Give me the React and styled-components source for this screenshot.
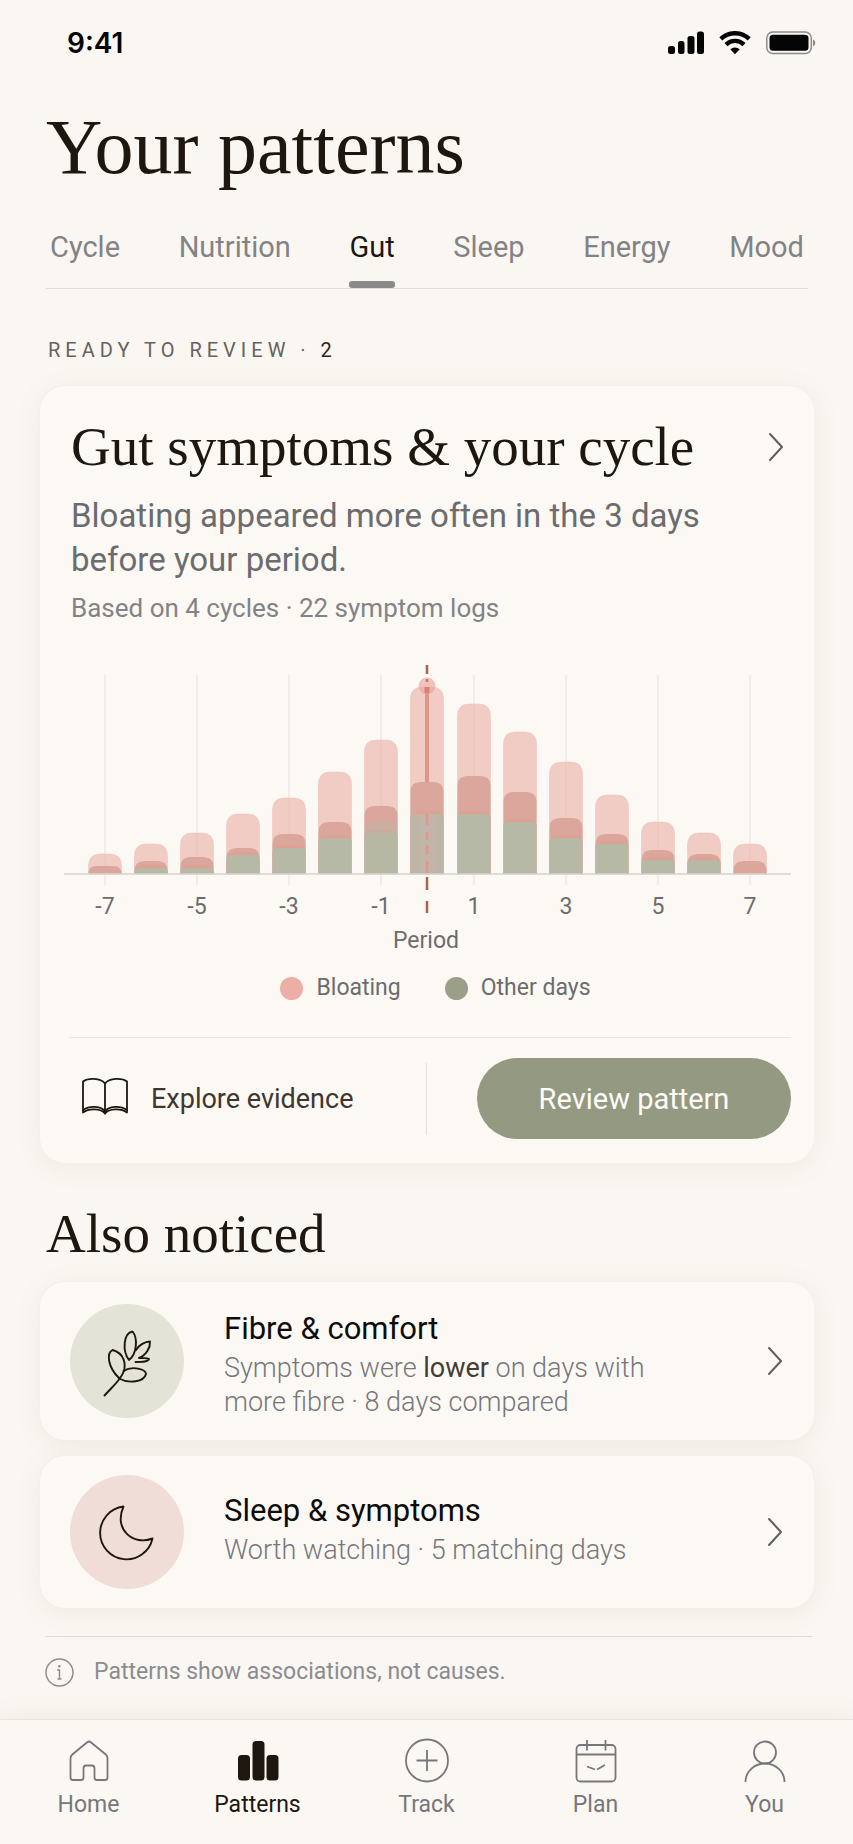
import { useState } from "react";
import styled, { createGlobalStyle } from "styled-components";

const sans = `Roboto, "Liberation Sans", Arial, sans-serif`;
const serif = `"Liberation Serif", "Times New Roman", serif`;

const GlobalStyle = createGlobalStyle`
    * {
        box-sizing: border-box;
    }
    body {
        margin: 0;
        background-color: #faf7f2;
        color: #1d1710;
        font-family: ${sans};
        font-weight: 400;
    }
    h1, h2, h3, p, figure {
        margin: 0;
        font-weight: inherit;
    }
    button {
        padding: 0;
        border: 0;
        background: none;
        color: inherit;
        font-family: inherit;
        font-weight: inherit;
        cursor: pointer;
    }
    a {
        color: inherit;
        text-decoration: none;
    }
    svg {
        display: block;
        flex-shrink: 0;
    }
`;

const Screen = styled.div`
    display: flex;
    flex-direction: column;
    min-height: 100vh;
`;

const StatusBar = styled.div`
    display: flex;
    align-items: center;
    justify-content: space-between;
    padding: 27px 37px 0 67px;
    color: #050505;
`;
const Time = styled.span`
    font-family: Inter, ${sans};
    font-weight: 600;
    font-size: 28px;
    line-height: 32px;
`;
const StatusIcons = styled.div`
    display: flex;
    align-items: center;
    gap: 15px;
`;

const Main = styled.main`
    flex: 1;
    padding: 44px 38px 31px 39px;
`;
const PageTitle = styled.h1`
    padding-left: 7px;
    font-family: ${serif};
    font-size: 78px;
    line-height: 88px;
`;

const Tabs = styled.nav`
    display: flex;
    justify-content: space-between;
    margin: 38px 7px 0;
    padding: 0 4px;
    border-bottom: 1px solid #dfdad5;
`;
const Tab = styled.button`
    font-size: 29px;
    line-height: 36px;
    color: ${(props) => (props.$active ? "#1d1710" : "#838386")};
    &::after {
        content: "";
        display: block;
        height: 7px;
        margin-top: 16px;
        border-radius: 3px;
        background-color: ${(props) => (props.$active ? "#8b8a89" : "transparent")};
    }
`;

const SectionLabel = styled.p`
    margin-top: 49px;
    padding-left: 9px;
    font-size: 20px;
    line-height: 24px;
    letter-spacing: 5px;
    color: #66625f;
    strong {
        font-weight: inherit;
        color: #2b2520;
    }
`;

const Surface = styled.section`
    border: 1px solid #f3efe9;
    border-radius: 26px;
    background-color: #fcf9f4;
    box-shadow: 0 4px 26px rgba(110, 90, 60, 0.08);
`;
const PatternCard = styled(Surface)`
    margin-top: 23px;
    padding: 29px 23px 24px 24px;
`;
const CardHead = styled.div`
    display: flex;
    align-items: center;
    justify-content: space-between;
    padding: 0 6px 0 7px;
`;
const Heading = styled.h2`
    font-family: ${serif};
    font-size: 55px;
    line-height: 64px;
`;
const IconButton = styled.button`
    color: #5f5f61;
`;
const Summary = styled.p`
    max-width: 660px;
    margin-top: 15px;
    padding-left: 7px;
    font-size: 33px;
    line-height: 44px;
    color: #6c6c6f;
`;
const Basis = styled.p`
    margin-top: 10px;
    padding-left: 7px;
    font-size: 26px;
    line-height: 32px;
    color: #838386;
`;

const ChartBox = styled.figure`
    margin-top: 36px;
    svg {
        width: 100%;
        height: auto;
    }
    text {
        font-size: 23px;
        text-anchor: middle;
        fill: #6c6c6f;
    }
`;
const Legend = styled.figcaption`
    display: flex;
    justify-content: center;
    gap: 44px;
    margin-top: 20px;
    padding-left: 16px;
`;
const LegendItem = styled.span`
    display: flex;
    align-items: center;
    gap: 13px;
    font-size: 23px;
    line-height: 28px;
    color: #6c6c6f;
    &::before {
        content: "";
        width: 23px;
        height: 23px;
        border-radius: 50%;
        background-color: ${(props) => props.$color};
    }
`;

const Actions = styled.div`
    display: flex;
    align-items: center;
    margin: 35px 0 0 5px;
    padding-top: 20px;
    border-top: 1px solid #e8e5e0;
`;
const EvidenceLink = styled.a`
    display: flex;
    flex: 1;
    align-items: center;
    gap: 23px;
    height: 72px;
    padding-left: 13px;
    border-right: 1px solid #e2dfda;
    font-size: 27px;
    color: #40362f;
`;
const ReviewButton = styled.button`
    width: 314px;
    height: 81px;
    margin-left: 50px;
    border-radius: 41px;
    background-color: #949981;
    font-size: 29px;
    color: #fdfcf9;
`;

const AlsoNoticed = styled(Heading)`
    margin-top: 38px;
    padding-left: 7px;
`;
const NoticeList = styled.div`
    display: grid;
    gap: 14px;
    margin-top: 15px;
`;
const NoticeCard = styled(Surface).attrs({ as: "a" })`
    display: flex;
    align-items: center;
    gap: 40px;
    padding: ${(props) => (props.$tall ? "21px" : "19px")} 30px;
`;
const Badge = styled.div`
    flex-shrink: 0;
    width: 114px;
    height: 114px;
    border-radius: 50%;
    background-color: ${(props) => props.$color};
`;
const NoticeText = styled.div`
    flex: 1;
    padding: ${(props) => (props.$tall ? "8px 0 0" : "0 0 4px")};
`;
const NoticeTitle = styled.h3`
    font-size: 31px;
    line-height: 36px;
    color: #0d0c0b;
`;
const NoticeDetail = styled.p`
    max-width: 440px;
    margin-top: 4px;
    font-size: 27px;
    font-weight: 300;
    line-height: 34px;
    color: #77777b;
    strong {
        font-weight: 400;
        color: #453c37;
    }
`;
const NoticeArrow = styled.span`
    color: #5f5f61;
`;

const Note = styled.p`
    display: flex;
    align-items: center;
    gap: 20px;
    margin: 27px 3px 0 6px;
    padding-top: 19px;
    border-top: 1px solid #dedad5;
    font-size: 23px;
    line-height: 32px;
    color: #8c8c90;
`;

const TabBar = styled.nav`
    display: grid;
    grid-template-columns: repeat(5, 1fr);
    padding: 18px 4px 25px;
    border-top: 1px solid #e9e5df;
    background-color: #fbf8f3;
    box-shadow: 0 -4px 24px rgba(110, 90, 60, 0.07);
`;
const TabBarItem = styled.a`
    display: flex;
    flex-direction: column;
    align-items: center;
    gap: 7px;
    font-size: 23px;
    line-height: 28px;
    color: ${(props) => (props.$active ? "#1d1710" : "#77777a")};
`;

const tabs = ["Cycle", "Nutrition", "Gut", "Sleep", "Energy", "Mood"];

// heights in chart units: all logs, shared logs, other days
const days = [
    { day: -7, bloating: 20, overlap: 8, other: 0 },
    { day: -6, bloating: 30, overlap: 13, other: 6 },
    { day: -5, bloating: 41, overlap: 17, other: 6 },
    { day: -4, bloating: 60, overlap: 26, other: 19 },
    { day: -3, bloating: 76, overlap: 40, other: 26 },
    { day: -2, bloating: 102, overlap: 52, other: 36 },
    { day: -1, bloating: 134, overlap: 68, other: 41 },
    { day: 0, bloating: 187, overlap: 92, other: 60 },
    { day: 1, bloating: 170, overlap: 98, other: 60 },
    { day: 2, bloating: 142, overlap: 82, other: 52 },
    { day: 3, bloating: 112, overlap: 56, other: 36 },
    { day: 4, bloating: 79, overlap: 40, other: 30 },
    { day: 5, bloating: 52, overlap: 24, other: 14 },
    { day: 6, bloating: 41, overlap: 20, other: 14 },
    { day: 7, bloating: 30, overlap: 13, other: 0 },
];

const BASE = 214;
const CENTER = 363;
const STEP = 46;
const BAR = 33;

const dayX = (day) => CENTER + day * STEP + (day > 0 ? 1 : 0);

function barPath(day, height, radius) {
    const r = Math.min(radius, height);
    const left = dayX(day) - BAR / 2;
    const top = BASE - height;
    return `M${left} ${BASE}V${top + r}q0 ${-r} ${r} ${-r}h${BAR - 2 * r}q${r} 0 ${r} ${r}V${BASE}z`;
}

function Chart() {
    const labelled = days.filter(({ day }) => day % 2 !== 0);
    return (
        <svg viewBox="0 0 727 294" role="img" aria-label="Symptom logs by day around your period">
            <defs>
                <linearGradient id="periodDay" x1="0" x2="1" y1="0" y2="0">
                    <stop offset="0" stopColor="#b9b5a5" />
                    <stop offset="0.35" stopColor="#c3b5a9" />
                    <stop offset="0.65" stopColor="#c3b5a9" />
                    <stop offset="1" stopColor="#b9b5a5" />
                </linearGradient>
            </defs>
            {labelled.map(({ day }) => (
                <path key={day} d={`M${dayX(day)} 15V225`} stroke="#e6e3de" />
            ))}
            {days.map(({ day, bloating, overlap, other }) => (
                <g key={day}>
                    <path d={barPath(day, bloating, 12)} fill="#ecb4ac" fillOpacity="0.66" stroke="#efc0b8" strokeOpacity="0.5" />
                    <path d={barPath(day, overlap, 10)} fill="#dba69b" />
                    {other > 0 && <path d={barPath(day, other + 3, 7)} fill="#e3a093" fillOpacity="0.7" />}
                    {other > 0 && <path d={barPath(day, other, 4)} fill={day === 0 ? "url(#periodDay)" : "#b6b9a5"} />}
                    {day === -1 && <path d={barPath(day, 52, 10)} fill="#b6b9a5" fillOpacity="0.45" />}
                </g>
            ))}
            <path d={`M0 ${BASE}H727`} stroke="#d9d0cb" strokeWidth="1.3" />
            <path d="M363 27V122" stroke="#e0958b" strokeWidth="4" />
            <circle cx="363" cy="26" r="8.500" fill="#e8a098" fillOpacity="0.6" />
            <path d="M360.500 27h5v6h-5z" fill="#d67f77" />
            <path d="M363 154v11m0 7v8m0 5v10m0 6v12" stroke="#dd9a90" strokeWidth="3" />
            <path d="M363 5v9M363 217v13M363 241v12" stroke="#ad6152" strokeWidth="2.500" />
            <path d="M363 19v3" stroke="#c9756b" strokeWidth="2.500" />
            {labelled.map(({ day }) => (
                <text key={day} x={dayX(day)} y="254">{day}</text>
            ))}
            <text x="362" y="288">Period</text>
        </svg>
    );
}

function Chevron() {
    return (
        <svg width="18" height="30" viewBox="0 0 18 30" fill="none" stroke="currentColor" strokeWidth="2" strokeLinecap="round" strokeLinejoin="round">
            <path d="M3 2l12 13L3 28" />
        </svg>
    );
}

function SignalIcon() {
    return (
        <svg width="36" height="24" viewBox="0 0 36 24" fill="currentColor">
            <rect x="0" y="15" width="7" height="8" rx="2.500" />
            <rect x="10" y="10" width="6.500" height="13" rx="2.500" />
            <rect x="19.500" y="5" width="7" height="18" rx="2.500" />
            <rect x="29" y="0.500" width="7" height="22.500" rx="2.500" />
        </svg>
    );
}

function WifiIcon() {
    return (
        <svg width="32" height="24" viewBox="0 0 32 24" fill="none" stroke="currentColor" strokeWidth="4.400">
            <path d="M1.800 7.900a20.500 20.500 0 0 1 28.400 0" />
            <path d="M7 13.600a12.800 12.800 0 0 1 18 0" />
            <path d="M16 23.300l-4.700-5a7 7 0 0 1 9.400 0z" fill="currentColor" stroke="none" />
        </svg>
    );
}

function BatteryIcon() {
    return (
        <svg width="50" height="24" viewBox="0 0 50 24">
            <rect x="0.800" y="1" width="44.500" height="21.500" rx="6" fill="none" stroke="#8c8b89" strokeWidth="1.500" />
            <rect x="3.500" y="3.800" width="39" height="16" rx="3.500" fill="currentColor" />
            <path d="M47 8.500c3 .8 3 6 0 6.800z" fill="#8c8b89" />
        </svg>
    );
}

function BookIcon() {
    return (
        <svg width="46" height="42" viewBox="0 0 46 42" fill="none" stroke="#1d1710" strokeWidth="1.800" strokeLinejoin="round" strokeLinecap="round">
            <path d="M23 5.500C18.500-.2 6-.2 1 3.500v31c6-4.500 18-4 22 1 4-5 16-5.500 22-1v-31C40-.2 27.500-.2 23 5.500z" />
            <path d="M23 5.500v30M1 32c6-4.500 18.500-4.500 22 1.500 3.500-6 16-6 22-1.500" />
        </svg>
    );
}

function SprigIcon() {
    return (
        <svg width="114" height="114" viewBox="0 0 114 114" fill="none" stroke="#1d1710" strokeWidth="1.900" strokeLinecap="round" strokeLinejoin="round">
            <path d="M34.500 91.500C42 83 50 77 53.500 68c3-8 .5-19-11-22-6 3-5 17 6.500 28" />
            <path d="M59 56c-7-9-5.500-27 3.500-28.500C68 34 67 50 59 56z" />
            <path d="M66 46c3-5 9-8.500 14-8.500.5 6-4 14-11 16.500 4 .5 8-.5 10 1-1 3-6 3-13.500 3" />
            <path d="M53.500 67C62 61.500 76 65 76 70c-2 8-17 10-27 4.500" />
        </svg>
    );
}

function MoonIcon() {
    return (
        <svg width="114" height="114" viewBox="0 0 114 114" fill="none" stroke="#1d1710" strokeWidth="1.900" strokeLinejoin="round">
            <path d="M53.500 31.500A26.500 26.500 0 1 0 82.500 63.500C64 71 43 55 53.500 31.500z" />
        </svg>
    );
}

function InfoIcon() {
    return (
        <svg width="29" height="29" viewBox="0 0 29 29" fill="none" stroke="currentColor" strokeWidth="1.500">
            <circle cx="14.500" cy="14.500" r="13.500" />
            <path d="M12 12h2.500v9M12.500 21h4" strokeWidth="1.400" />
            <circle cx="14.300" cy="8.300" r="1.300" fill="currentColor" stroke="none" />
        </svg>
    );
}

function NavIcon({ children }) {
    return (
        <svg width="46" height="46" viewBox="0 0 46 46" fill="none" stroke="currentColor" strokeWidth="1.800" strokeLinejoin="round">
            {children}
        </svg>
    );
}

const destinations = [
    {
        name: "Home",
        icon: <path d="M4.500 20.500q0-2.500 1.800-4L21.200 4.200q1.800-1.400 3.600 0l15 12.300q1.700 1.500 1.700 4v19q0 2.500-2.500 2.500h-8q-2.500 0-2.500-2.500v-9q0-3-2.500-3h-6q-2.500 0-2.500 3v9q0 2.500-2.500 2.500H7q-2.500 0-2.500-2.500z" />,
    },
    {
        name: "Patterns",
        active: true,
        icon: (
            <g fill="currentColor" stroke="none">
                <rect x="3" y="17" width="12" height="25.500" rx="3.500" />
                <rect x="17.500" y="3" width="12" height="39.500" rx="3.500" />
                <rect x="31.500" y="17" width="12" height="25.500" rx="3.500" />
            </g>
        ),
    },
    {
        name: "Track",
        icon: (
            <>
                <circle cx="23" cy="22.500" r="21" />
                <path d="M23 12v21M12.500 22.500h21" />
            </>
        ),
    },
    {
        name: "Plan",
        icon: (
            <>
                <rect x="3.500" y="7" width="39" height="36.500" rx="4" />
                <path d="M3.500 16.500h39M14 2v10.500M32.500 2v10.500M14 28.500l8 3M24 31.500l8-4.500" />
            </>
        ),
    },
    {
        name: "You",
        icon: (
            <>
                <circle cx="23" cy="14.500" r="11" />
                <path d="M3.500 44a19.500 18.500 0 0 1 39 0" />
            </>
        ),
    },
];

function App() {
    const [tab, setTab] = useState("Gut");
    return (
        <Screen>
            <GlobalStyle />
            <StatusBar>
                <Time>9:41</Time>
                <StatusIcons>
                    <SignalIcon />
                    <WifiIcon />
                    <BatteryIcon />
                </StatusIcons>
            </StatusBar>
            <Main>
                <PageTitle>Your patterns</PageTitle>
                <Tabs>
                    {tabs.map((name) => (
                        <Tab key={name} $active={name === tab} onClick={() => setTab(name)}>
                            {name}
                        </Tab>
                    ))}
                </Tabs>
                <SectionLabel>
                    READY TO REVIEW · <strong>2</strong>
                </SectionLabel>
                <PatternCard>
                    <CardHead>
                        <Heading>Gut symptoms &amp; your cycle</Heading>
                        <IconButton aria-label="Open pattern">
                            <Chevron />
                        </IconButton>
                    </CardHead>
                    <Summary>Bloating appeared more often in the 3 days before your period.</Summary>
                    <Basis>Based on 4 cycles · 22 symptom logs</Basis>
                    <ChartBox>
                        <Chart />
                        <Legend>
                            <LegendItem $color="#edaea5">Bloating</LegendItem>
                            <LegendItem $color="#9b9f88">Other days</LegendItem>
                        </Legend>
                    </ChartBox>
                    <Actions>
                        <EvidenceLink href="#evidence">
                            <BookIcon />
                            Explore evidence
                        </EvidenceLink>
                        <ReviewButton>Review pattern</ReviewButton>
                    </Actions>
                </PatternCard>
                <AlsoNoticed>Also noticed</AlsoNoticed>
                <NoticeList>
                    <NoticeCard href="#fibre" $tall>
                        <Badge $color="#e4e3d8">
                            <SprigIcon />
                        </Badge>
                        <NoticeText $tall>
                            <NoticeTitle>Fibre &amp; comfort</NoticeTitle>
                            <NoticeDetail>
                                Symptoms were <strong>lower</strong> on days with more fibre · 8 days compared
                            </NoticeDetail>
                        </NoticeText>
                        <NoticeArrow>
                            <Chevron />
                        </NoticeArrow>
                    </NoticeCard>
                    <NoticeCard href="#sleep">
                        <Badge $color="#f1ddd7">
                            <MoonIcon />
                        </Badge>
                        <NoticeText>
                            <NoticeTitle>Sleep &amp; symptoms</NoticeTitle>
                            <NoticeDetail>Worth watching · 5 matching days</NoticeDetail>
                        </NoticeText>
                        <NoticeArrow>
                            <Chevron />
                        </NoticeArrow>
                    </NoticeCard>
                </NoticeList>
                <Note>
                    <InfoIcon />
                    Patterns show associations, not causes.
                </Note>
            </Main>
            <TabBar>
                {destinations.map(({ name, icon, active }) => (
                    <TabBarItem key={name} href={`#${name.toLowerCase()}`} $active={active}>
                        <NavIcon>{icon}</NavIcon>
                        {name}
                    </TabBarItem>
                ))}
            </TabBar>
        </Screen>
    );
}

export default App;
